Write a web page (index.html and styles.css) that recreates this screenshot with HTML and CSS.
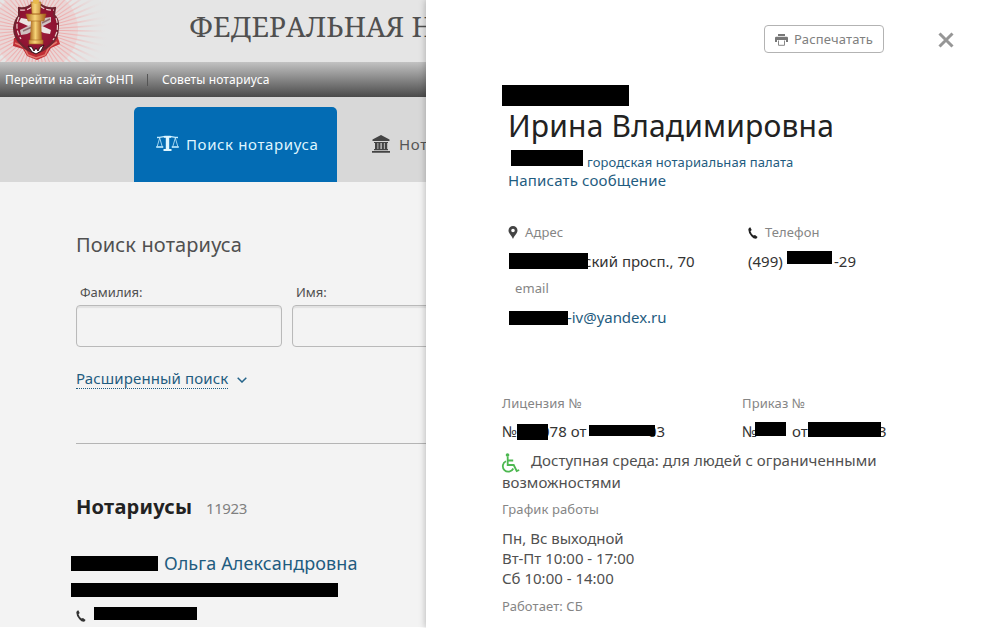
FILE: index.html
```html
<!DOCTYPE html>
<html lang="ru">
<head>
<meta charset="utf-8">
<title>Поиск нотариуса</title>
<link rel="stylesheet" href="styles.css">
</head>
<body>
<div class="page">
  <header class="brand">
    <svg class="emblem" width="120" height="62" viewBox="0 0 120 62">
      <defs>
        <radialGradient id="glow" gradientUnits="userSpaceOnUse" cx="36" cy="30" r="75">
          <stop offset=".3" stop-color="#ef8585" stop-opacity=".6"/>
          <stop offset=".6" stop-color="#f3abab" stop-opacity=".45"/>
          <stop offset="1" stop-color="#e5e5e5" stop-opacity="0"/>
        </radialGradient>
        <linearGradient id="gold"><stop offset="0" stop-color="#a8661d"/><stop offset=".45" stop-color="#f7d477"/><stop offset="1" stop-color="#a35c18"/></linearGradient>
        <radialGradient id="ruby"><stop offset="0" stop-color="#a3203f"/><stop offset="1" stop-color="#8b1230"/></radialGradient>
      </defs>
      <circle cx="36" cy="30" r="42" fill="#f3b5b5" opacity=".3"/>
      <circle cx="36" cy="30" r="50" fill="none" stroke="url(#glow)" stroke-width="72" stroke-dasharray="1.800 3.436"/>
      <path d="M14 38l-1 8 10 3 4 7 10 4 9-4 5-8 9-4-3-9z" fill="#bf2d35"/>
      <path d="M15 43l9 4 4 8 8 3 9-3 4-8 8-5" fill="none" stroke="#e2786e" stroke-width="1.5"/>
      <path d="M19 8q8 1 13-4h8q6 5 15 4l-1 7q5 5 4 12 0 12-8 18-8 7-14 8-9-2-14-8-8-7-8-17 1-8 5-12z" fill="url(#ruby)" stroke="#6d2430" stroke-width="2"/>
      <path d="M20 10q8 1 13-4h7q6 5 14 4M19 17q-5 11 2 22M56 18q4 12-3 22" fill="none" stroke="#ead0cc" stroke-width="1.2" stroke-dasharray="5 2"/>
      <path d="M21 18l6 1 24 11-1 4-6-1-25-11z" fill="#ece4e3"/>
      <path d="M51 17l-7 1-24 12 1 5 6-1 24-12z" fill="#cfc2c2"/>
      <path d="M23 31l9-4M42 23l8-4" stroke="#8f6c70" stroke-width="1.5"/>
      <path d="M28 46l4 6 4 2 5-3 3-6-4 2-2 4-2-3-2 3-2-4z" fill="#fff" stroke="#351217"/>
      <path d="M31 20h10l1 22H30z" fill="url(#gold)"/>
      <path d="M26 14h20l-2 7H28zM31 2h10l-1 12h-8zM29 40h14v4H29z" fill="url(#gold)" stroke="#a9651e" stroke-width=".6"/>
      <circle cx="36" cy="1" r="3" fill="#e9b94d"/>
    </svg>
    <div class="brand-name">ФЕДЕРАЛЬНАЯ Н</div>
  </header>
  <nav class="links"><a class="l1">Перейти на сайт ФНП</a><i class="sep"></i><a class="l2">Советы нотариуса</a></nav>
  <div class="tabs">
    <div class="tab active">
      <svg width="23" height="17" viewBox="0 0 23 17" fill="none" stroke="#c4ecff"><path d="M1 2.5c4 0 6-1 8-1h5c2 0 4 1 8 1" stroke-width="1.3"/><path d="M8 1h7v1.800h-1.800v11.200h2.300v2H7.500v-2h2.300v-11.200H8z" fill="#dff6ff" stroke="none"/><path d="M3.700 3L1.200 11.500M3.700 3l2.500 8.500M19.300 3l-2.500 8.500M19.300 3l2.500 8.500M.500 11.500h6.500v1H.500zM16 11.500h6.500v1H16z" stroke-width=".8"/></svg>
      <span class="tab-text">Поиск нотариуса</span>
    </div>
    <div class="tab second">
      <svg width="18" height="18" viewBox="0 0 18 18" fill="#444"><path d="M9 0l8.500 4.500V6H.500V4.500zM2 7h14v1H2zM3 8h2.500v6H3zM6.300 8h2.200v6H6.300zM9.700 8h2.200v6H9.700zM12.700 8h2.500v6h-2.500zM2 14h14v1.200H2zM0 16h18v1.800H0z"/></svg>
      <span class="tab-text">Нот</span>
    </div>
  </div>
  <main class="search">
    <h1>Поиск нотариуса</h1>
    <div class="fields">
      <label><span class="f1">Фамилия:</span><input type="text"></label>
      <label><span class="f2">Имя:</span><input type="text"></label>
    </div>
    <div class="more"><a>Расширенный поиск</a><svg width="10" height="6" viewBox="0 0 10 6"><path d="M.7.7L5 5 9.300.7" fill="none" stroke="#25648a" stroke-width="1.5"/></svg></div>
    <hr>
    <div class="found"><h2>Нотариусы</h2><span class="count">11923</span></div>
    <div class="person"><i class="mask p1"></i><a>Ольга Александровна</a></div>
    <i class="mask p2"></i>
    <div class="phone"><svg width="10" height="12" viewBox="0 0 10 12"><path d="M2.300.2L3.700 3 2.500 4.200Q3.300 7 5.600 8.600L7 7.900 9.600 9.900 8.500 11.600Q6 12.200 3.300 9.200.3 5.800.3 2.500.6.8 2.300.2z" fill="#333"/></svg><i class="mask p3"></i></div>
  </main>
</div>
<aside class="panel">
  <div class="actions">
    <button class="print"><svg width="13" height="12" viewBox="0 0 13 12"><path d="M3 0h7v2H3zM0 4q0-1.200 1.200-1.200h10.600Q13 2.800 13 4v4h-2V6H2v2H0z" fill="#777"/><path d="M3.500 6.500v4.800h6V6.500" fill="#fff" stroke="#888"/></svg><span>Распечатать</span></button>
    <svg class="close" width="16" height="16" viewBox="0 0 16 16"><path d="M1.500 1.500l13 13M14.500 1.500l-13 13" stroke="#969696" stroke-width="3"/></svg>
  </div>
  <i class="mask surname"></i>
  <h2 class="name">Ирина Владимировна</h2>
  <div class="chamber"><i class="mask m1"></i><a>городская нотариальная палата</a></div>
  <a class="write">Написать сообщение</a>
  <div class="contacts">
    <div class="col address">
      <div class="label"><svg width="10" height="13" viewBox="0 0 10 13"><path d="M5 0a4.500 4.500 0 0 1 4.500 4.500C9.500 7.500 6.300 9.300 5 13 3.700 9.300.5 7.500.5 4.500A4.500 4.500 0 0 1 5 0zm0 2.700a1.800 1.800 0 1 0 0 3.600 1.800 1.800 0 0 0 0-3.600z" fill="#444" fill-rule="evenodd"/></svg><span>Адрес</span></div>
      <div class="value"><i class="mask a1"></i><span>ский просп., 70</span></div>
      <div class="label email-label"><span>email</span></div>
      <div class="value"><i class="mask a2"></i><a class="mail">-iv@yandex.ru</a></div>
    </div>
    <div class="col">
      <div class="label"><svg class="handset" width="10" height="12" viewBox="0 0 10 12"><path d="M2.300.2L3.700 3 2.500 4.200Q3.300 7 5.600 8.600L7 7.900 9.600 9.900 8.500 11.600Q6 12.200 3.300 9.200.3 5.800.3 2.500.6.8 2.300.2z" fill="#222"/></svg><span>Телефон</span></div>
      <div class="value"><span class="code">(499)</span><i class="mask a3"></i><span>-29</span></div>
    </div>
  </div>
  <div class="docs">
    <div class="col license"><div class="label"><span>Лицензия №</span></div>
      <div class="value"><span class="num">№</span><i class="mask d1"></i><span class="mid">078 от</span><i class="mask d2"></i><span>03</span></div></div>
    <div class="col"><div class="label"><span>Приказ №</span></div>
      <div class="value"><span class="num2">№</span><i class="mask d3"></i><span class="mid2">от</span><i class="mask d4"></i><span>3</span></div></div>
  </div>
  <p class="access"><svg width="19" height="20" viewBox="0 0 19 20" fill="none" stroke="#4db851" stroke-width="1.800"><circle cx="6.500" cy="2" r="1.800" fill="#4db851" stroke="none"/><path d="M6.700 3.500v8.500h6l3 6 2.500-1M6.700 7.500h5.500M5 8.200A5.500 5.500 0 1 0 12.300 15.500"/></svg>Доступная среда: для людей с ограниченными<br>возможностями</p>
  <div class="label hours-label"><span>График работы</span></div>
  <p class="hours">Пн, Вс выходной<br>Вт-Пт 10:00 - 17:00<br>Сб 10:00 - 14:00</p>
  <div class="label works"><span>Работает: СБ</span></div>
</aside>
</body>
</html>
```
FILE: styles.css
```css
* { box-sizing: border-box; }
body {
  margin: 0;
  width: 984px;
  height: 628px;
  display: flex;
  overflow: hidden;
  background: #fff;
  font: 15px/20px "Noto Sans", sans-serif;
  color: #333;
}
h1, h2, p { margin: 0; font-weight: 400; }
svg { display: block; flex: none; }
a { color: #1f5c80; white-space: nowrap; letter-spacing: .12px; }
span { white-space: nowrap; }
.mask { display: block; flex: none; background: #000; }

.page { width: 426px; height: 627px; overflow: hidden; background: #f3f3f3; flex: none; }
.brand { height: 62px; display: flex; background: #e5e5e5; }
.brand-name {
  flex: none;
  margin-left: 69px;
  font: 28px/53px "Noto Serif", "Liberation Serif", serif;
  color: #505050;
  white-space: nowrap;
}
.links {
  height: 35px;
  padding-left: 5px;
  display: flex;
  align-items: center;
  background: linear-gradient(#c2c2c2, #4a4a4a);
  font-size: 12px;
}
.links a { color: #fff; }
.l1 { width: 142px; }
.sep { width: 1px; height: 12px; background: #555; margin-right: 14px; }
.tabs { height: 85px; padding: 10px 0 0 134px; display: flex; background: #d8d8d8; }
.tab { height: 75px; padding-bottom: 2px; display: flex; align-items: center; flex: none; letter-spacing: .62px; color: #555; }
.active { width: 203px; padding-left: 22px; background: #036cb4; color: #dff5ff; border-radius: 5px 5px 0 0; }
.active .tab-text { margin-left: 7px; }
.second { padding-left: 35px; }
.second .tab-text { margin-left: 9px; }

.search { padding: 50px 0 0 76px; }
.search h1 { font-size: 20px; line-height: 26px; letter-spacing: .13px; color: #505050; }
.fields { display: flex; gap: 10px; margin-top: 24px; }
.fields label { flex: none; width: 206px; font-size: 13px; line-height: 20px; color: #505050; }
.fields span { display: block; margin: 0 0 3px 4px; }
.fields input {
  display: block;
  width: 206px;
  height: 42px;
  border: 1px solid #b9b9b9;
  border-radius: 4px;
  background: #f3f3f3;
  box-shadow: inset 0 2px 1px #e2e2e2;
}
.more { display: flex; align-items: center; margin-top: 22px; height: 20px; }
.more a { border-bottom: 1px dotted #1f5c80; line-height: 19px; }
.more svg { margin: 2px 0 0 9px; }
hr { border: 0; height: 1px; margin: 54px 0 0; background: #b4b4b4; }
.found { display: flex; align-items: baseline; margin-top: 49px; height: 28px; line-height: 28px; }
.found h2 { font-size: 20px; font-weight: 700; color: #222; width: 130px; letter-spacing: .22px; }
.count { color: #808080; letter-spacing: -.4px; }
.person { display: flex; align-items: center; margin: 31px 0 0 -5px; height: 22px; font-size: 18px; line-height: 22px; }
.p1 { width: 87px; height: 15px; margin-right: 6px; }
.p2 { width: 267px; height: 14px; margin: 9px 0 0 -5px; }
.phone { display: flex; margin-top: 10px; }
.phone svg { margin-top: 3px; }
.p3 { width: 103px; height: 13px; margin-left: 8px; }

.panel {
  width: 558px;
  height: 628px;
  padding: 25px 0 0 76px;
  background: #fff;
  box-shadow: 0 0 7px rgba(0,0,0,.28);
  position: relative;
}
.actions { display: flex; padding-left: 262px; height: 28px; align-items: center; }
.print {
  display: flex;
  align-items: center;
  width: 120px;
  height: 28px;
  padding: 0 0 0 10px;
  border: 1px solid #b3b3b3;
  border-radius: 4px;
  background: #fff;
  font: 13px/20px "Noto Sans", sans-serif;
  letter-spacing: .18px;
  color: #808080;
}
.print svg { margin-top: 2px; }
.print span { margin-left: 6px; }
.close { margin: 1px 0 0 54px; }
.surname { width: 127px; height: 21px; margin-top: 32px; }
.name { margin-left: 6px; font-size: 30px; line-height: 40px; letter-spacing: .18px; color: #222; white-space: nowrap; }
.chamber { display: flex; margin-left: 9px; height: 26px; font-size: 13px; line-height: 20px; }
.m1 { width: 72px; height: 16px; margin: 4px 4px 0 0; }
.chamber a { margin-top: 6px; letter-spacing: .09px; }
.write { display: block; margin: -2px 0 0 6px; line-height: 20px; letter-spacing: .17px; }
.contacts, .docs { display: flex; }
.contacts { margin: 32px 0 0 6px; }
.address, .license { width: 240px; }
.label { display: flex; align-items: center; height: 20px; font-size: 13px; letter-spacing: .1px; color: #858585; }
.label svg + span { margin-left: 7px; }
.handset { margin-top: 1px; }
.value { display: flex; height: 20px; color: #333; }
.contacts .value { margin-top: 9px; }
.a1 { width: 79px; height: 16px; margin: 2px -4px 0 1px; z-index: 1; }
.email-label { padding-left: 7px; margin-top: 7px; }
.a2 { width: 59px; height: 14px; margin: 4px -1px 0 1px; z-index: 1; }
.mail { letter-spacing: -.04px; }
.code { width: 39px; }
.a3 { width: 45px; height: 13px; margin: 0 2px 0 0; }
.docs { margin-top: 66px; }
.docs .value { margin-top: 8px; }
.num { width: 15px; }
.d1 { width: 31px; height: 16px; margin: 3px -7px 0 0; z-index: 1; }
.mid { width: 48px; }
.d2 { width: 66px; height: 11px; margin: 4px -7px 0 0; z-index: 1; }
.num2 { width: 13px; }
.d3 { width: 31px; height: 14px; margin: 1px 6px 0 0; }
.mid2 { width: 16px; }
.d4 { width: 73px; height: 15px; margin: 1px -3px 0 0; z-index: 1; }
.access { margin-top: 8px; line-height: 22px; letter-spacing: .05px; color: #505050; white-space: nowrap; }
.access svg { display: inline-block; vertical-align: -3px; margin: -8px 11px -4px -1px; }
.hours-label { margin-top: 6px; }
.hours { margin-top: 9px; line-height: 20px; color: #505050; }
.works { margin-top: 8px; }
```
